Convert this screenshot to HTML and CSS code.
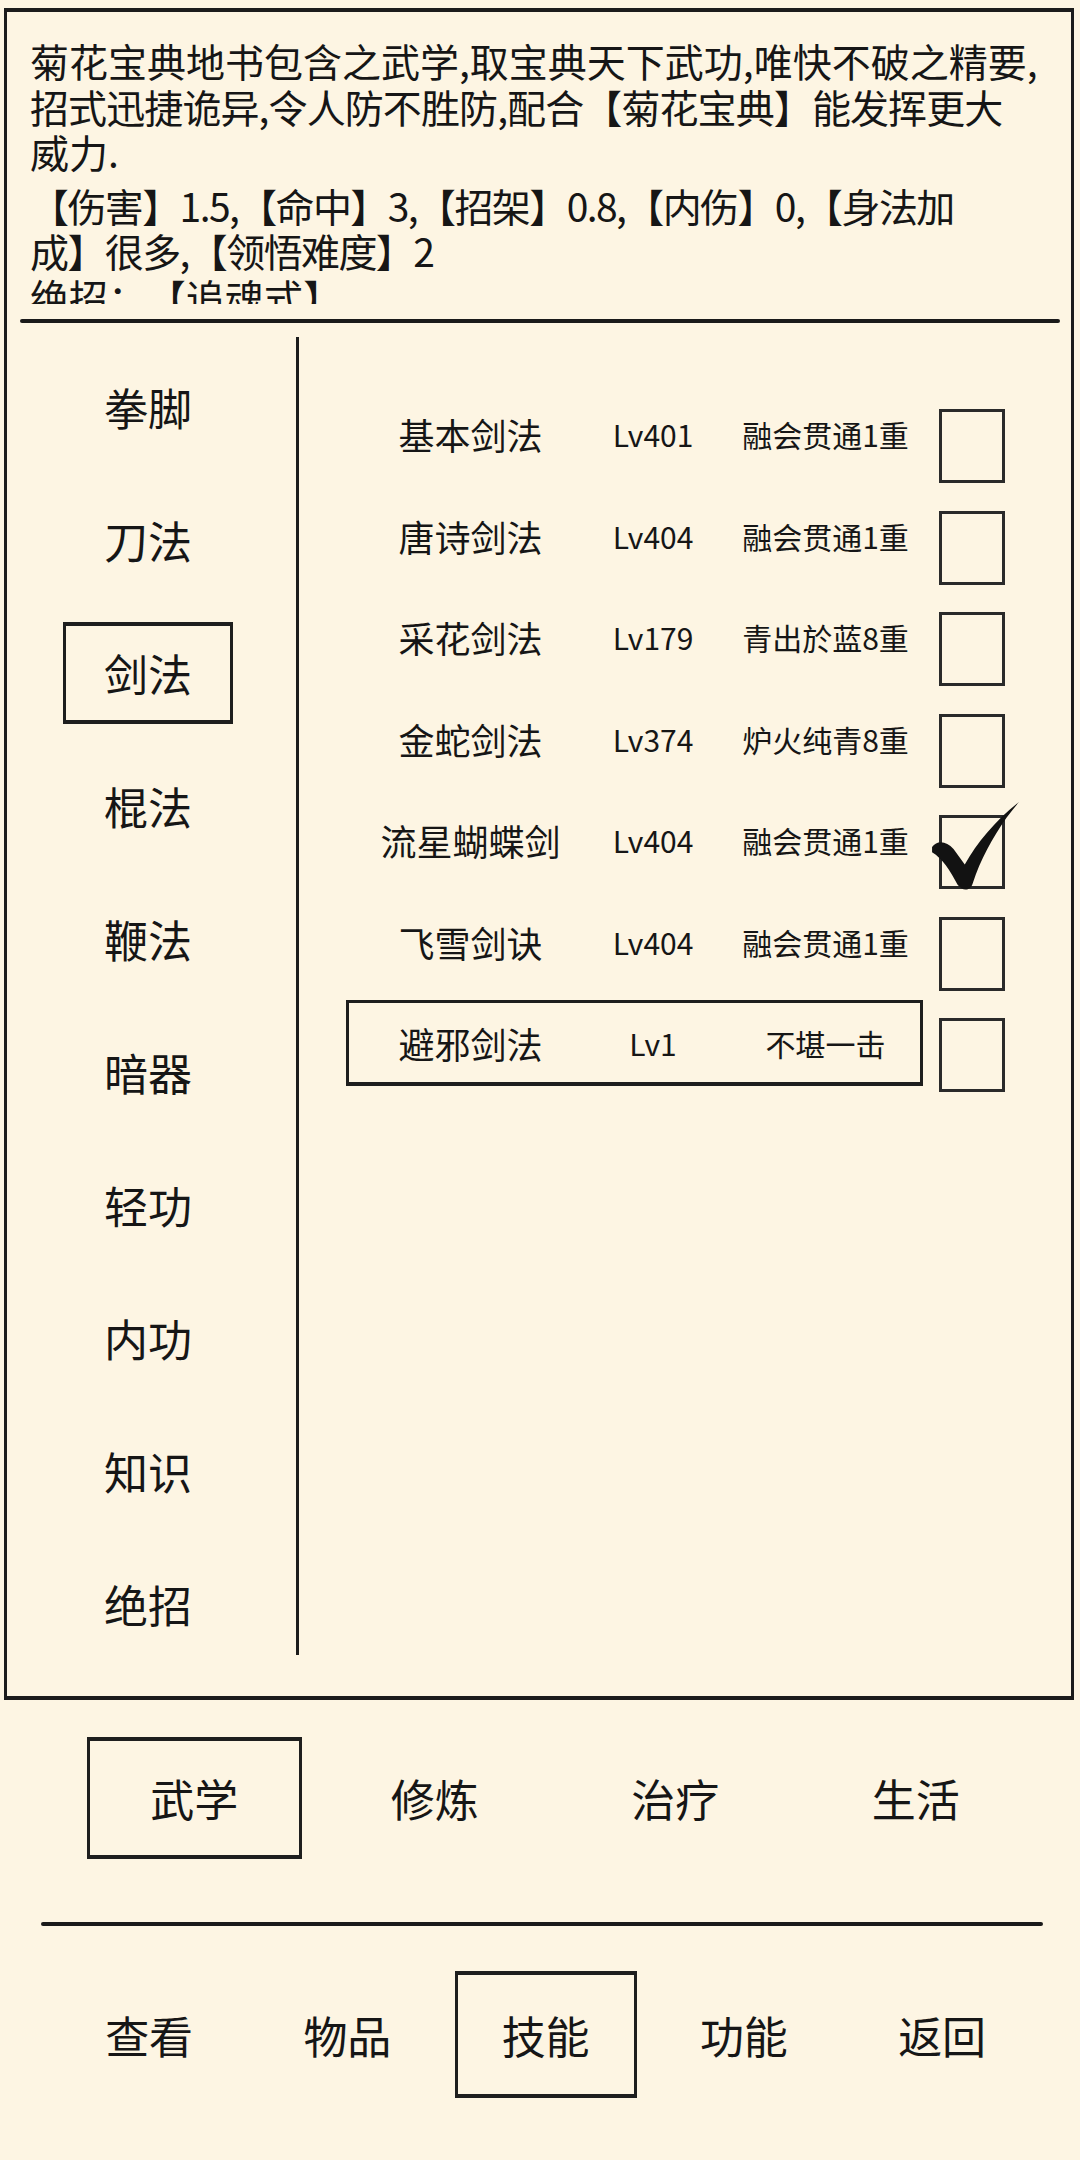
FILE: index.html
```html
<!DOCTYPE html>
<html lang="zh-CN">
<head>
<meta charset="utf-8">
<title>技能</title>
<link rel="stylesheet" href="styles.css">
</head>
<body>
<div class="frame">
  <section class="desc">
    <div class="desc-text">
      <p>菊花宝典地书包含之武学,取宝典天下武功,唯快不破之精要,<br><span class="tight">招式迅捷诡异,令人防不胜防,配合【菊花宝典】能发挥更大</span><br>威力.</p>
      <p class="stats">【伤害】1.5,【命中】3,【招架】0.8,【内伤】0,【身法加<br>成】很多,【领悟难度】2</p>
      <p class="ult">绝招：【追魂式】</p>
    </div>
  </section>
  <div class="rule"></div>
  <div class="body">
    <nav class="cats">
      <div class="cat"><span>拳脚</span></div>
      <div class="cat"><span>刀法</span></div>
      <div class="cat"><span class="sel">剑法</span></div>
      <div class="cat"><span>棍法</span></div>
      <div class="cat"><span>鞭法</span></div>
      <div class="cat"><span>暗器</span></div>
      <div class="cat"><span>轻功</span></div>
      <div class="cat"><span>内功</span></div>
      <div class="cat"><span>知识</span></div>
      <div class="cat"><span>绝招</span></div>
    </nav>
    <div class="list">
      <div class="row">
        <div class="row-main"><span class="name">基本剑法</span><span class="lv">Lv401</span><span class="stat">融会贯通1重</span></div>
        <div class="check"></div>
      </div>
      <div class="row">
        <div class="row-main"><span class="name">唐诗剑法</span><span class="lv">Lv404</span><span class="stat">融会贯通1重</span></div>
        <div class="check"></div>
      </div>
      <div class="row">
        <div class="row-main"><span class="name">采花剑法</span><span class="lv">Lv179</span><span class="stat">青出於蓝8重</span></div>
        <div class="check"></div>
      </div>
      <div class="row">
        <div class="row-main"><span class="name">金蛇剑法</span><span class="lv">Lv374</span><span class="stat">炉火纯青8重</span></div>
        <div class="check"></div>
      </div>
      <div class="row">
        <div class="row-main"><span class="name">流星蝴蝶剑</span><span class="lv">Lv404</span><span class="stat">融会贯通1重</span></div>
        <div class="check checked">
          <svg class="tick" viewBox="-10 -14 90 92" width="92" height="94" aria-hidden="true">
            <path d="M-8 33 C-3 26 6 27 13 35 L24 50 C36 29 54 7 77 -11 C73 -6 69 -1 65 4 C51 24 39 46 32 68 C30 76 22 77 17 70 C10 56 2 44 -8 38 Z" fill="#121212"/>
          </svg>
        </div>
      </div>
      <div class="row">
        <div class="row-main"><span class="name">飞雪剑诀</span><span class="lv">Lv404</span><span class="stat">融会贯通1重</span></div>
        <div class="check"></div>
      </div>
      <div class="row">
        <div class="row-main current"><span class="name">避邪剑法</span><span class="lv">Lv1</span><span class="stat">不堪一击</span></div>
        <div class="check"></div>
      </div>
    </div>
  </div>
</div>

<div class="tabs">
  <div class="tab"><span class="sel tab-sel">武学</span></div>
  <div class="tab"><span>修炼</span></div>
  <div class="tab"><span>治疗</span></div>
  <div class="tab"><span>生活</span></div>
</div>

<div class="sep"></div>

<div class="nav">
  <div class="nav-item"><span>查看</span></div>
  <div class="nav-item"><span>物品</span></div>
  <div class="nav-item"><span class="sel nav-sel">技能</span></div>
  <div class="nav-item"><span>功能</span></div>
  <div class="nav-item"><span>返回</span></div>
</div>
</body>
</html>
```

FILE: styles.css
```css
html, body {
  margin: 0;
  padding: 0;
}

body {
  width: 1080px;
  height: 2160px;
  background: #fdf5e3;
  color: #161616;
  font-family: "Noto Sans CJK SC", "Noto Sans", sans-serif;
  overflow: hidden;
}

.frame {
  margin: 8px 6px 0 4px;
  border-style: solid;
  border-color: #1c1c1c;
  border-width: 4px 3px 4px 3px;
}

.desc {
  padding: 26px 0 0 23px;
}

.desc-text {
  height: 266px;
  overflow: hidden;
  font-size: 39px;
  line-height: 45.5px;
  white-space: nowrap;
  text-spacing-trim: space-all;
}

.desc-text p {
  margin: 0;
}

.desc-text .stats {
  margin-top: 8px;
  letter-spacing: -1.6px;
}

.tight {
  letter-spacing: -0.9px;
}

.rule {
  height: 4px;
  margin: 15px 11px 0 13px;
  background: #1a1a1a;
  border-radius: 2px;
}

.body {
  display: flex;
}

.cats {
  width: 292px;
  height: 1318px;
  margin: 14px 0 41px 0;
  padding: 3px 7px 0 0;
  box-sizing: border-box;
  border-right: 3px solid #1c1c1c;
  display: grid;
  grid-auto-rows: 133px;
  flex: none;
}

.cat {
  display: flex;
  align-items: center;
  justify-content: center;
  font-size: 44px;
}

.sel {
  display: flex;
  align-items: center;
  justify-content: center;
  box-sizing: border-box;
  border-style: solid;
  border-color: #1e1e1e;
  border-width: 4px 3px 4px 3px;
}

.cat .sel {
  width: 170px;
  height: 102px;
}

.list {
  flex: 1;
  padding: 63px 0 0 47px;
}

.row {
  display: flex;
  align-items: flex-start;
  height: 101.5px;
}

.row-main {
  width: 577px;
  height: 86px;
  margin-top: 5px;
  box-sizing: border-box;
  border: 3px solid transparent;
  display: grid;
  grid-template-columns: 246px 116px 215px;
  align-items: center;
}

.row-main.current {
  border-color: #1e1e1e;
  border-width: 3px 3px 4px 3px;
}

.row-main > span {
  text-align: center;
  white-space: nowrap;
}

.name {
  font-size: 36px;
  margin-left: -3px;
}

.lv {
  font-size: 30px;
}

.stat {
  font-size: 30px;
  padding-left: 14px;
}

.check {
  position: relative;
  width: 66px;
  height: 74px;
  margin: 23px 0 0 16px;
  box-sizing: border-box;
  border: 3px solid #2a2a2a;
  flex: none;
}

.tick {
  position: absolute;
  left: -12px;
  top: -19px;
  overflow: visible;
}

.tabs {
  margin: 37px 0 0 74px;
  display: grid;
  grid-template-columns: repeat(4, 240.5px);
  height: 122px;
}

.tab, .nav-item {
  display: flex;
  align-items: center;
  justify-content: center;
  font-size: 44px;
}

.tab-sel {
  width: 215px;
  height: 122px;
}

.sep {
  height: 4px;
  margin: 63px 37px 0 41px;
  background: #1a1a1a;
  border-radius: 2px;
}

.nav {
  margin: 45px 0 0 50px;
  display: grid;
  grid-template-columns: repeat(5, 198.25px);
  height: 127px;
}

.nav-sel {
  width: 182px;
  height: 127px;
}
```
